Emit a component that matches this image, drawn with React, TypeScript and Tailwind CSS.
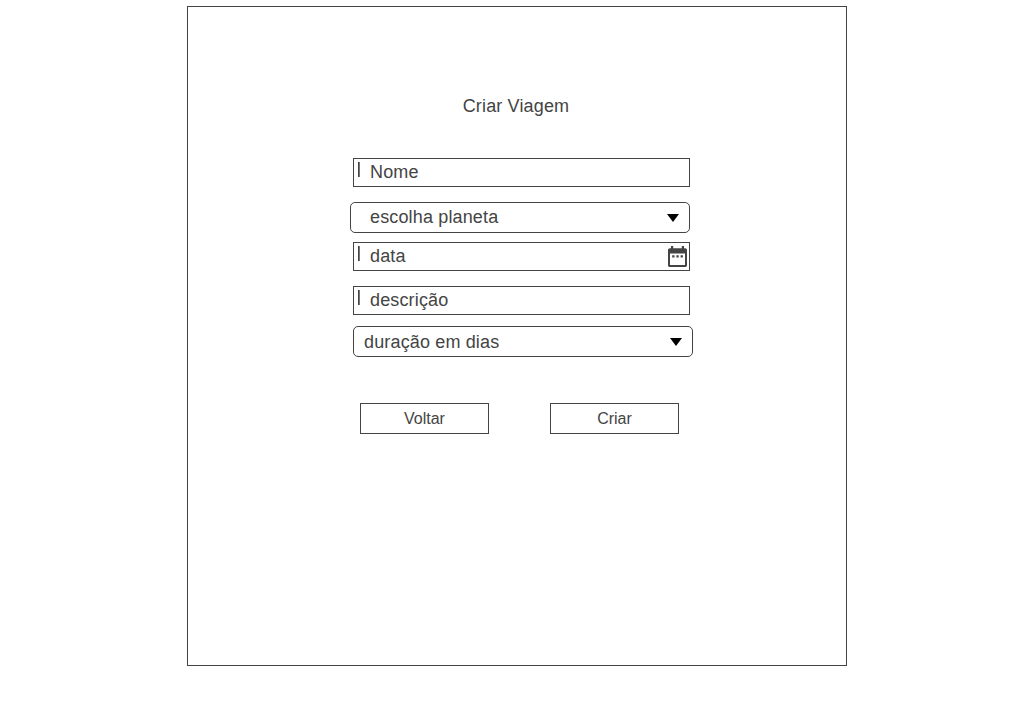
type InputProps = { label: string; className?: string; calendar?: boolean };

function Caret() {
  return <span className="mt-[3px] ml-1 h-[15px] w-[2px] self-start border-r border-[#777] bg-[#444]" />;
}

function CalendarIcon() {
  return (
    <svg className="mt-[3px] mr-0.5 h-[21px] w-[19px] self-start" viewBox="0 0 19 21">
      <path
        fill="#444"
        fillRule="evenodd"
        d="M3 0h2.200v2.200h8.600V0H16v2.200h1.200c1 0 1.800.8 1.800 1.800v15.200c0 1-.8 1.800-1.800 1.800H1.800C.8 21 0 20.200 0 19.200V4c0-1 .8-1.800 1.800-1.800H3zM2 7.500V19h15V7.500z"
      />
      <path fill="#444" d="M4.200 9.300h2.300v2.300H4.200zM8.400 9.300h2.300v2.300H8.400zM12.600 9.300h2.300v2.300h-2.300z" />
    </svg>
  );
}

function TextField({ label, className = "", calendar = false }: InputProps) {
  return (
    <div className={`ml-[3px] flex h-[29px] w-[337px] items-center border border-[#444] ${className}`}>
      <Caret />
      <span className="ml-[10px] flex-1 leading-[27px]">{label}</span>
      {calendar && <CalendarIcon />}
    </div>
  );
}

function SelectField({ label, className = "" }: InputProps) {
  return (
    <div className={`flex h-[31px] w-[340px] justify-between rounded-[5px] border border-[#444] pr-[10px] ${className}`}>
      <span>{label}</span>
      <svg className="mt-[11px] h-2 w-3" viewBox="0 0 12 8">
        <path d="M0 0h12L6 8z" fill="#000" />
      </svg>
    </div>
  );
}

function ActionButton({ label }: { label: string }) {
  return (
    <button className="h-[31px] w-[129px] border border-[#444] text-[16px] leading-[29px] tracking-normal">
      {label}
    </button>
  );
}

export default function App() {
  return (
    <main className="h-[728px] w-full bg-white pt-1.5 pl-[187px] font-['Liberation_Sans',Arial,sans-serif] text-[18px] text-[#444]">
      <section className="h-[660px] w-[660px] border border-[#444] pl-[162px]">
        <h1 className="mt-[85px] ml-[112.700px] leading-[28px] tracking-[0.15px]">Criar Viagem</h1>
        <form className="mt-[38px] flex flex-col tracking-[0.15px]">
          <TextField label="Nome" />
          <SelectField label="escolha planeta" className="mt-[15px] pl-[19px] leading-[29px]" />
          <TextField label="data" className="mt-[9px]" calendar />
          <TextField label="descrição" className="mt-[15px]" />
          <SelectField label="duração em dias" className="mt-[11px] ml-[3px] pl-[10px] leading-[31px]" />
          <div className="mt-[46px] ml-[10px] flex gap-[61px]">
            <ActionButton label="Voltar" />
            <ActionButton label="Criar" />
          </div>
        </form>
      </section>
    </main>
  );
}
